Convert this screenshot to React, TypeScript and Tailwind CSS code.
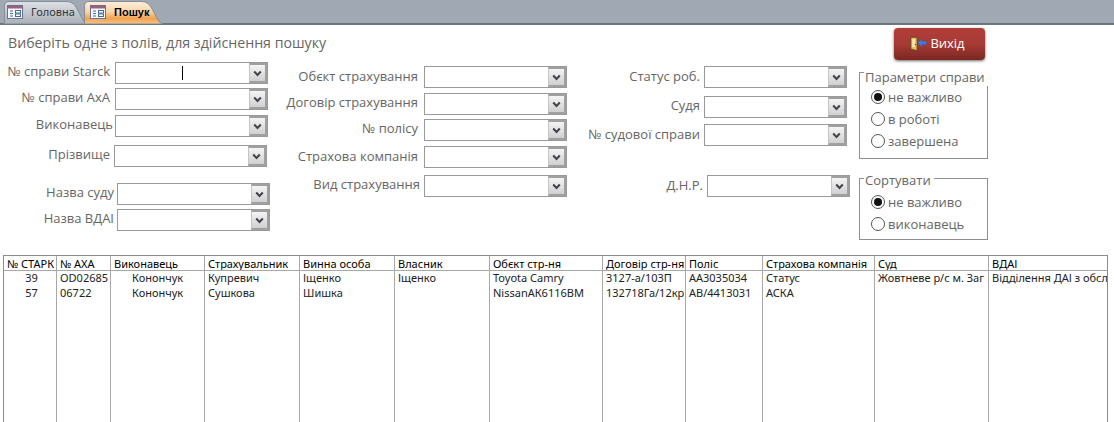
import React from "react";

const FormIcon = () => (
  <svg width="16" height="14" viewBox="0 0 16 14" className="shrink-0 relative">
    <rect x="0.5" y="0.5" width="15" height="13" fill="#f6f8fc" stroke="#6f6f92" />
    <rect x="1" y="1" width="14" height="2.5" fill="#9c5f7e" />
    <path d="M3 6h3M3 8.5h3M3 11h3" stroke="#3f6aa8" />
    <rect x="8.5" y="5.5" width="5" height="2.5" fill="#fff" stroke="#3f6aa8" />
    <rect x="8.5" y="9" width="5" height="2.5" fill="#fff" stroke="#3f6aa8" />
  </svg>
);

const TabShape = ({ id, stops, w }: { id: string; stops: [string, string][]; w: number }) => (
  <svg width={w} height="23" viewBox={`0 0 ${w} 23`} className="absolute left-0 top-0">
    <defs>
      <linearGradient id={id} x1="0" y1="0" x2="0" y2="1">
        {stops.map(([o, c]) => (
          <stop key={o} offset={o} stopColor={c} />
        ))}
      </linearGradient>
    </defs>
    <path
      d={`M0.5 23V5Q0.5 0.5 5 0.5H${w - 22}Q${w - 15} 0.5 ${w - 12} 6L${w - 5} 19Q${w - 3} 22.5 ${w} 23Z`}
      fill={`url(#${id})`}
      stroke="#858d97"
    />
  </svg>
);

const Chevron = () => (
  <svg width="9" height="7" viewBox="0 0 9 7">
    <path d="M1.2 1.5 4.5 5 7.8 1.5" fill="none" stroke="#3f444a" strokeWidth="2" />
  </svg>
);

function Combo({ w = "w-[153px]", caret }: { w?: string; caret?: boolean }) {
  return (
    <div className={`${w} h-[22px] flex border border-[#9a9a9a] bg-white shrink-0`}>
      <div className="flex-1 relative">
        {caret && <div className="absolute left-[66px] top-[3px] w-px h-[14px] bg-black" />}
      </div>
      <div className="w-[18px] flex items-center justify-center bg-gradient-to-b from-[#f4f4f4] to-[#d0d0d0] border-2 border-[#a0a0a0] border-l-[#c4c4c4] border-l">
        <Chevron />
      </div>
    </div>
  );
}

function Field({
  label,
  labelW,
  mt,
  gap,
  caret,
  comboW,
  lift = "pb-[5px]",
}: {
  label: string;
  labelW: string;
  mt: string;
  gap: string;
  caret?: boolean;
  comboW?: string;
  lift?: string;
}) {
  return (
    <div className={`flex items-center h-[22px] ${mt}`}>
      <div className={`${labelW} ${gap} ${lift} text-right whitespace-nowrap text-[13px] leading-[18px] text-[#666666]`}>{label}</div>
      <Combo caret={caret} w={comboW} />
    </div>
  );
}

function Radio({ label, on, mt }: { label: string; on?: boolean; mt?: string }) {
  return (
    <div className={`flex items-center h-[18px] ${mt ?? ""}`}>
      <div className="w-[14px] h-[14px] rounded-full border border-[#555] bg-white flex items-center justify-center shrink-0">
        {on && <div className="w-[8px] h-[8px] rounded-full bg-[#111]" />}
      </div>
      <span className="ml-[3px] text-[13px] leading-[18px] text-[#666666] whitespace-nowrap">{label}</span>
    </div>
  );
}

function Group({
  title,
  h,
  mt,
  top,
  children,
}: {
  title: string;
  h: string;
  mt: string;
  top: string;
  children: React.ReactNode;
}) {
  return (
    <div className={`relative w-[129px] ${h} ${mt} border border-[#8f8f8f] pl-[11px]`}>
      <div className={`absolute left-[4px] ${top} bg-white pl-[1px] pr-[3px] text-[13px] leading-[18px] text-[#666666] whitespace-nowrap`}>
        {title}
      </div>
      {children}
    </div>
  );
}

const cols = [
  { w: "w-[52px]", head: "№ СТАРК", a: "39", b: "57", cell: "text-center" },
  { w: "w-[54px]", head: "№ АХА", a: "OD02685", b: "06722", cell: "" },
  { w: "w-[94px]", head: "Виконавець", a: "Конончук", b: "Конончук", cell: "pl-[21px]" },
  { w: "w-[95px]", head: "Страхувальник", a: "Купревич", b: "Сушкова", cell: "" },
  { w: "w-[95px]", head: "Винна особа", a: "Іщенко", b: "Шишка", cell: "" },
  { w: "w-[95px]", head: "Власник", a: "Іщенко", b: "", cell: "" },
  { w: "w-[113px]", head: "Обєкт стр-ня", a: "Toyota Camry", b: "NissanАК6116ВМ", cell: "" },
  { w: "w-[83px]", head: "Договір стр-ня", a: "3127-а/103П", b: "132718Га/12кр", cell: "" },
  { w: "w-[77px]", head: "Поліс", a: "АА3035034", b: "АВ/4413031", cell: "" },
  { w: "w-[112px]", head: "Страхова компанія", a: "Статус", b: "АСКА", cell: "" },
  { w: "w-[114px]", head: "Суд", a: "Жовтневе р/с м. Заг", b: "", cell: "" },
  { w: "w-[120px]", head: "ВДАІ", a: "Відділення ДАІ з обсл", b: "", cell: "" },
];

export default function App() {
  return (
    <div className="w-[1114px] h-[422px] overflow-hidden bg-white flex flex-col font-['Open_Sans',sans-serif]">
      <div className="h-[25px] shrink-0 bg-[#a0a8b3] border-b-2 border-[#6d7680] flex items-end pl-[4px]">
        <div className="relative h-[22px] w-[84px] flex items-center pl-[3px]">
          <TabShape id="t1" w={84} stops={[["0", "#dde0e5"], ["0.5", "#c4c8ce"], ["1", "#a9afb7"]]} />
          <FormIcon />
          <span className="relative ml-[8px] text-[11px] font-['Noto_Sans',sans-serif] text-[#33373c]">Головна</span>
        </div>
        <div className="relative h-[22px] w-[79px] -ml-[4px] flex items-center pl-[6px]">
          <TabShape id="t2" w={79} stops={[["0", "#fbeedd"], ["0.45", "#f9d6a8"], ["0.75", "#f0a24e"], ["1", "#f7c48c"]]} />
          <FormIcon />
          <span className="relative ml-[8px] text-[11px] font-bold font-['Liberation_Sans',sans-serif] text-black">Пошук</span>
        </div>
      </div>

      <div className="h-[37px] shrink-0 flex items-start">
        <div className="ml-[8px] mt-[8px] w-[886px] text-[14.2px] leading-[20px] text-[#666666] whitespace-nowrap">
          Виберіть одне з полів, для здійснення пошуку
        </div>
        <button className="mt-[3px] w-[91px] h-[32px] pr-[5px] rounded-[4px] bg-gradient-to-b from-[#b03e3a] via-[#a83a35] to-[#7a2722] shadow-[0_1px_3px_rgba(0,0,0,0.6)] flex items-center justify-center gap-[3px] text-white text-[13px]">
          <svg width="18" height="16" viewBox="0 0 20 17">
            <path d="M2 1h7v15l-7-2z" fill="#e2bb55" stroke="#4a3a16" strokeWidth="0.8" />
            <rect x="3.5" y="3" width="3.5" height="9" fill="#f5e3a6" />
            <circle cx="7.3" cy="9" r="0.8" fill="#5a4a1c" />
            <path d="M9.5 7l5-4v2.5h5v3.5h-5V12z" fill="#3f7be0" stroke="#2a55a8" strokeWidth="0.4" />
          </svg>
          <span>Вихід</span>
        </button>
      </div>

      <div className="h-[193px] shrink-0 flex items-start">
        <div className="w-[286px] shrink-0">
          <Field label="№ справи Starck" labelW="w-[110px]" gap="mr-[5px]" mt="mt-0" caret />
          <Field label="№ справи АхА" labelW="w-[110px]" gap="mr-[5px]" mt="mt-[4px]" />
          <Field label="Виконавець" labelW="w-[113px]" gap="mr-[2px]" mt="mt-[5px]" />
          <Field label="Прізвище" labelW="w-[110px]" gap="mr-[4px]" mt="mt-[8px]" />
          <Field label="Назва суду" labelW="w-[114px]" gap="mr-[3px]" mt="mt-[16px]" />
          <Field label="Назва ВДАІ" labelW="w-[114px]" gap="mr-[3px]" mt="mt-[4px]" />
        </div>
        <div className="w-[281px] shrink-0 pt-[4px]">
          <Field label="Обєкт страхування" labelW="w-[132px]" gap="mr-[6px]" mt="mt-0" comboW="w-[143px]" lift="pb-[3px]" />
          <Field label="Договір страхування" labelW="w-[132px]" gap="mr-[6px]" mt="mt-[5px]" comboW="w-[143px]" />
          <Field label="№ полісу" labelW="w-[132px]" gap="mr-[6px]" mt="mt-[4px]" comboW="w-[143px]" />
          <Field label="Страхова компанія" labelW="w-[132px]" gap="mr-[6px]" mt="mt-[5px]" comboW="w-[143px]" lift="pb-[3px]" />
          <Field label="Вид страхування" labelW="w-[134px]" gap="mr-[4px]" mt="mt-[7px]" comboW="w-[143px]" />
        </div>
        <div className="w-[292px] shrink-0 pt-[4px]">
          <Field label="Статус роб." labelW="w-[133px]" gap="mr-[4px]" mt="mt-0" comboW="w-[143px]" lift="pb-[3px]" />
          <Field label="Судя" labelW="w-[133px]" gap="mr-[4px]" mt="mt-[8px]" comboW="w-[143px]" />
          <Field label="№ судової справи" labelW="w-[133px]" gap="mr-[4px]" mt="mt-[6px]" comboW="w-[143px]" lift="pb-[3px]" />
          <Field label="Д.Н.Р." labelW="w-[136px]" gap="mr-[4px]" mt="mt-[29px]" comboW="w-[143px]" lift="pb-[3px]" />
        </div>
        <div className="w-[129px] shrink-0">
          <Group title="Параметри справи" h="h-[87px]" mt="mt-[10px]" top="top-[-5px]">
            <div className="pt-[15px]">
              <Radio label="не важливо" on />
              <Radio label="в роботі" mt="mt-[4px]" />
              <Radio label="завершена" mt="mt-[4px]" />
            </div>
          </Group>
          <Group title="Сортувати" h="h-[62px]" mt="mt-[19px]" top="top-[-8px]">
            <div className="pt-[14px]">
              <Radio label="не важливо" on />
              <Radio label="виконавець" mt="mt-[4px]" />
            </div>
          </Group>
        </div>
      </div>

      <div className="flex-1 ml-[3px] w-[1105px] border border-[#8c8c8c] border-b-0 flex font-['Noto_Sans',sans-serif] text-[11px] leading-[15px] text-[#222] overflow-hidden">
        {cols.map((c, i) => (
          <div key={c.head} className={`${c.w} shrink-0 overflow-hidden ${i > 0 ? "border-l border-[#a8a8a8]" : ""}`}>
            <div className="h-[15px] border-b border-[#a8a8a8] pl-[3px] whitespace-nowrap overflow-hidden text-black">{c.head}</div>
            <div className={`h-[15px] -mt-[1px] pl-[3px] whitespace-nowrap overflow-hidden ${c.cell}`}>{c.a}</div>
            <div className={`h-[15px] pl-[3px] whitespace-nowrap overflow-hidden ${c.cell}`}>{c.b}</div>
          </div>
        ))}
      </div>
    </div>
  );
}
